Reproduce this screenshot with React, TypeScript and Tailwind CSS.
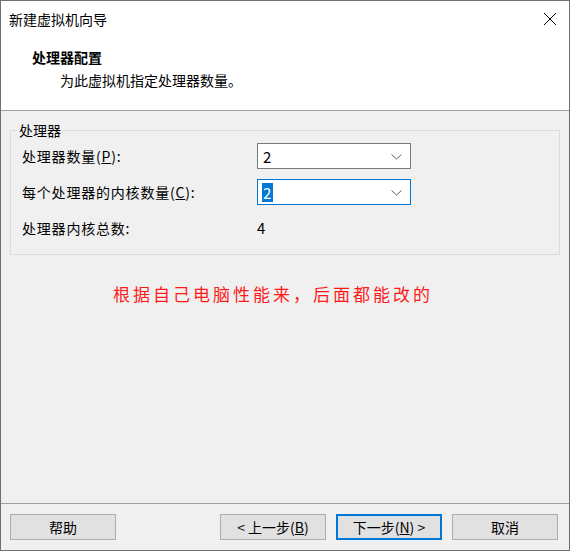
import React from "react";

const font = {
  fontFamily: '"Segoe UI", "Noto Sans CJK SC", "Noto Sans", sans-serif',
};

const Combo = ({ value, focused }: { value: string; focused?: boolean }) => {
  return (
    <div
      className={
        focused
          ? "flex h-[26px] w-[154px] items-center justify-between border border-[#0078d7] bg-white pl-[4px] pr-[8px]"
          : "flex h-[26px] w-[154px] items-center justify-between border border-[#7a7a7a] bg-white pl-[4px] pr-[8px]"
      }
    >
      {focused ? (
        <span className="bg-[#0078d7] px-[1px] text-[15px] leading-[19px] text-white">{value}</span>
      ) : (
        <span className="px-[1px] text-[15px] leading-[19px] text-black">{value}</span>
      )}
      <svg width="11" height="6" viewBox="0 0 11 6" className="mt-[1px]">
        <path d="M0.5 0.5 L5.5 5 L10.5 0.5" fill="none" stroke="#606060" strokeWidth="1" />
      </svg>
    </div>
  );
};

const Btn = ({ children, primary }: { children: React.ReactNode; primary?: boolean }) => {
  return (
    <button
      className={
        primary
          ? "flex h-[26px] w-[106px] items-center justify-center border-2 border-[#0078d7] bg-[#e1e1e1] text-[14px] text-black"
          : "flex h-[26px] w-[106px] items-center justify-center border border-[#adadad] bg-[#e1e1e1] text-[14px] text-black"
      }
    >
      {children}
    </button>
  );
};

export default function App() {
  return (
    <div className="h-[551px] w-[570px] bg-white">
      <div
        className="flex h-[551px] w-[570px] flex-col border border-[#6f6f6f] bg-[#f0f0f0] text-black"
        style={font}
      >
        {/* Header */}
        <div className="flex h-[110px] flex-col border-b border-[#a0a0a0] bg-white">
          <div className="flex h-[36px] items-center justify-between pl-[8px] pr-[12px]">
            <span className="text-[14px]">新建虚拟机向导</span>
            <svg width="14" height="14" viewBox="0 0 14 14">
              <path d="M1 1 L13 13 M13 1 L1 13" stroke="#000" strokeWidth="1" />
            </svg>
          </div>
          <div className="pl-[31px] pt-[10px] text-[14px] font-bold leading-[20px]">处理器配置</div>
          <div className="pl-[59px] pt-[3px] text-[14px] leading-[20px]">为此虚拟机指定处理器数量。</div>
        </div>

        {/* Body */}
        <div className="h-[392px] px-[9px] pt-[9px]">
          <fieldset className="border border-[#dcdcdc] px-[11px] pb-[13px]">
            <legend className="-ml-[5px] px-[2px] text-[14px] leading-[20px]">处理器</legend>
            <div className="mt-[3px] grid grid-cols-[235px_154px] items-center gap-y-[10px] text-[14px] tracking-[0.8px]">
              <span>
                处理器数量(<span className="underline">P</span>):
              </span>
              <Combo value="2" />
              <span>
                每个处理器的内核数量(<span className="underline">C</span>):
              </span>
              <Combo value="2" focused />
              <span className="leading-[26px]">处理器内核总数:</span>
              <span className="text-[15px] leading-[26px]">4</span>
            </div>
          </fieldset>
          <div className="pl-[103px] pt-[27px] text-[17px] leading-[24px] tracking-[3px] text-[#ff1a1a]">
            根据自己电脑性能来，后面都能改的
          </div>
        </div>

        {/* Footer */}
        <div className="flex flex-1 items-start justify-between border-t border-[#a0a0a0] pl-[9px] pr-[11px] pt-[10px]">
          <Btn>帮助</Btn>
          <div className="flex gap-[10px]">
            <Btn>
              &lt; 上一步(<span className="underline">B</span>)
            </Btn>
            <Btn primary>
              下一步(<span className="underline">N</span>) &gt;
            </Btn>
            <Btn>取消</Btn>
          </div>
        </div>
      </div>
    </div>
  );
}
